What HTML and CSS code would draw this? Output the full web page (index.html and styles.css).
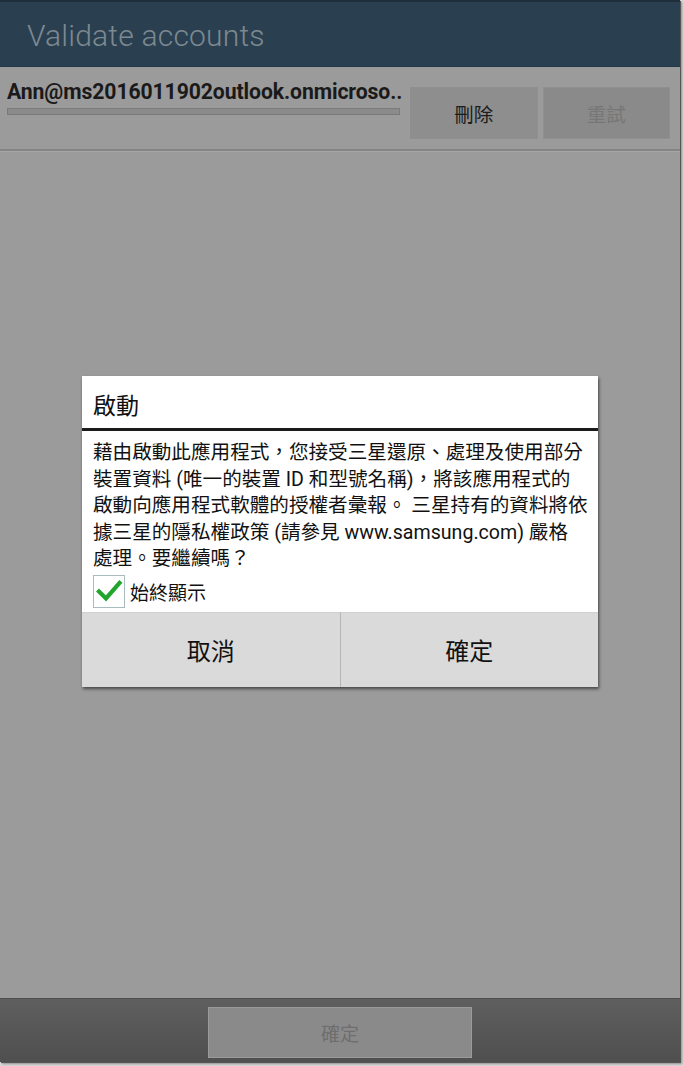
FILE: index.html
```html
<!DOCTYPE html>
<html>
<head>
<meta charset="utf-8">
<link rel="stylesheet" href="styles.css">
</head>
<body>
<div class="screen">
  <header class="actionbar">
    <h1 class="title">Validate accounts</h1>
  </header>
  <main class="content">
    <div class="account-row">
      <div class="account-info">
        <div class="email">Ann@ms2016011902outlook.onmicroso..</div>
        <div class="progress"></div>
      </div>
      <button class="btn btn-delete">刪除</button>
      <button class="btn btn-retry">重試</button>
    </div>
  </main>
  <footer class="bottombar">
    <button class="btn-ok">確定</button>
  </footer>

  <div class="dialog">
    <div class="dialog-title">啟動</div>
    <div class="dialog-body">
      <p class="dialog-text">藉由啟動此應用程式，您接受三星還原、處理及使用部分<br>裝置資料 (唯一的裝置 ID 和型號名稱)，將該應用程式的<br>啟動向應用程式軟體的授權者彙報。 三星持有的資料將依<br>據三星的隱私權政策 (請參見 www.samsung.com) 嚴格<br>處理。要繼續嗎？</p>
      <label class="check-row">
        <span class="checkbox">
          <svg width="28" height="28" viewBox="0 0 28 28"><path d="M4 14.5 L11 21.5 L24.5 6" fill="none" stroke="#22a52c" stroke-width="4.2" stroke-linecap="square"/></svg>
        </span>
        <span class="check-label">始終顯示</span>
      </label>
    </div>
    <div class="dialog-buttons">
      <button class="dbtn">取消</button>
      <button class="dbtn">確定</button>
    </div>
  </div>
</div>
</body>
</html>
```

FILE: styles.css
```css
html, body {
  margin: 0;
  padding: 0;
}
body {
  width: 684px;
  height: 1066px;
  background: #d8d8d8;
  overflow: hidden;
  font-family: Roboto, "Noto Sans CJK TC", sans-serif;
}
.screen {
  position: relative;
  width: 680px;
  height: 1062px;
  display: flex;
  flex-direction: column;
  background: #9a9a9a;
  box-shadow: 1px 1px 0 #555, 2px 2px 2px rgba(0,0,0,0.35);
}
.actionbar {
  height: 64px;
  border-top: 2px solid #1e2f3b;
  background: #2a4051;
  border-bottom: 1px solid #22394a;
  display: flex;
  align-items: center;
  padding-left: 27px;
}
.title {
  margin: 0;
  font-family: Roboto, sans-serif;
  font-weight: 300;
  font-size: 30px;
  color: #7d8990;
  letter-spacing: 0.2px;
  margin-top: 2px;
}
.content {
  flex: 1;
  background: #9b9b9b;
}
.account-row {
  display: flex;
  align-items: flex-start;
  padding: 20px 10px 0 7px;
  height: 62px;
  border-bottom: 2px solid #848484;
  box-shadow: 0 1px 0 #a6a6a6;
}
.account-info {
  width: 393px;
  margin-right: 10px;
}
.email {
  font-family: Roboto, sans-serif;
  font-weight: 700;
  font-size: 21.2px;
  color: #1a1a1a;
  letter-spacing: -0.1px;
  white-space: nowrap;
  line-height: 20px;
  margin-top: -5px;
}
.progress {
  margin-top: 6px;
  height: 5px;
  background: #8b8b8b;
  border: 1px solid #7a7a7a;
}
.btn {
  width: 128px;
  height: 52px;
  border: 1px solid #8f8f8f;
  font-family: "Noto Sans CJK TC", sans-serif;
  font-size: 19.5px;
  padding: 0;
}
.btn-delete {
  background: #8e8e8e;
  color: #1d1d1d;
  margin-right: 5px;
}
.btn-retry {
  background: #8a8a8a;
  color: #777;
}
.bottombar {
  border-top: 1px solid #4d4d4d;
  background: linear-gradient(#5f5f5f, #4f4f4f);
  display: flex;
  justify-content: center;
  padding-top: 8px;
  box-sizing: border-box;
  height: 64px;
}
.btn-ok {
  width: 264px;
  height: 51px;
  background: #8a8a8a;
  border: 1px solid #9a9a9a;
  color: #6e6e6e;
  font-family: "Noto Sans CJK TC", sans-serif;
  font-size: 19px;
  padding: 0;
}
.dialog {
  position: absolute;
  left: 82px;
  top: 376px;
  width: 516px;
  background: #fff;
  box-shadow: 1px 2px 3px rgba(0,0,0,0.55);
  font-family: Roboto, "Noto Sans CJK TC", sans-serif;
}
.dialog-title {
  height: 55px;
  box-sizing: border-box;
  padding-left: 11px;
  padding-top: 4px;
  display: flex;
  align-items: center;
  font-size: 23px;
  color: #111;
  border-bottom: 3px solid #1b1b1b;
}
.dialog-body {
  padding: 9px 8px 3px 11px;
}
.dialog-text {
  margin: 0;
  font-size: 19.6px;
  line-height: 26.6px;
  color: #111;
  white-space: nowrap;
}
.check-row {
  display: flex;
  align-items: center;
  margin-top: 2px;
}
.checkbox {
  width: 30px;
  height: 31px;
  border: 1px solid #a8bcbf;
  display: flex;
  align-items: center;
  justify-content: center;
}
.check-label {
  margin-left: 5px;
  font-size: 19px;
  color: #111;
}
.dialog-buttons {
  display: flex;
  height: 75px;
  margin-top: 1px;
}
.dbtn {
  flex: 1;
  background: #dadada;
  border: none;
  border-top: 1px solid #d0d0d0;
  font-family: "Noto Sans CJK TC", sans-serif;
  font-size: 24px;
  color: #111;
  padding: 0;
}
.dbtn + .dbtn {
  border-left: 1px solid #b5b5b5;
}
```
